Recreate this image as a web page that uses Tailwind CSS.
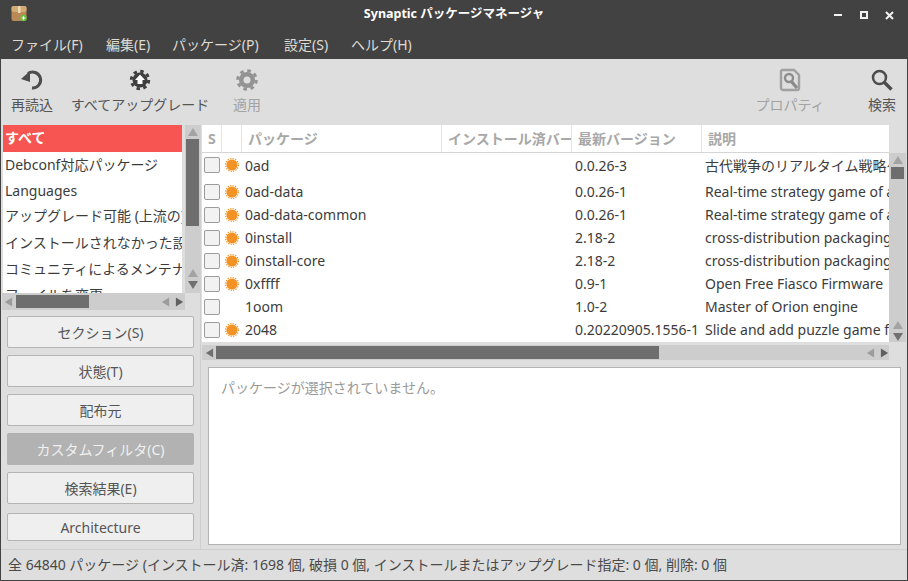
<!DOCTYPE html>
<html lang="ja">
<head>
  <meta charset="UTF-8" />
  <title>Synaptic パッケージマネージャ</title>
  <script src="https://cdn.jsdelivr.net/npm/@tailwindcss/browser@4"></script>
</head>
<body class="bg-[#dedede] font-['Noto_Sans','Noto_Sans_CJK_JP',sans-serif] text-[14px] text-[#3c3c3c] overflow-hidden">
  <svg class="hidden">
    <symbol id="sun" viewBox="0 0 14 14">
      <circle cx="7" cy="7" r="5.6" fill="#f39325" />
      <circle cx="7" cy="7" r="6.4" fill="none" stroke="#f39325" stroke-width="1.2" stroke-dasharray="1.2 1.3" />
    </symbol>
    <symbol id="up" viewBox="0 0 12 10"><polygon points="6,1 11,9 1,9" /></symbol>
    <symbol id="down" viewBox="0 0 12 10"><polygon points="1,1 11,1 6,9" /></symbol>
    <symbol id="left" viewBox="0 0 10 12"><polygon points="9,1 9,11 1,6" /></symbol>
    <symbol id="right" viewBox="0 0 10 12"><polygon points="1,1 9,6 1,11" /></symbol>
  </svg>

  <div class="w-[908px] h-[581px] flex flex-col border-x border-b border-[#424242]">
    <!-- title bar + menu -->
    <div class="bg-[#424242] h-[59px] -mx-px shrink-0">
      <div class="h-[30px] flex items-center relative">
        <svg class="ml-[11px] mt-[-3px]" width="17" height="17" viewBox="0 0 17 17">
          <rect x="0.5" y="1" width="15" height="15" rx="2" fill="#b98a55" />
          <rect x="0.5" y="1" width="15" height="6" rx="2" fill="#d3ab75" />
          <rect x="7" y="1" width="2.5" height="7" fill="#ecd9b5" />
          <circle cx="12.5" cy="13" r="3.2" fill="#6cbf3c" />
          <path d="M12.5 11.2v3.6M10.7 13h3.6" stroke="#fff" stroke-width="1.2" />
        </svg>
        <div class="absolute left-0 right-0 top-[5px] text-center pl-[-8px] text-white font-bold text-[12.5px] leading-[18px]">Synaptic パッケージマネージャ</div>
        <div class="ml-auto flex items-center mr-[14px]">
          <div class="w-[8px] h-[2px] bg-[#f2f2f2] mr-[18px]"></div>
          <div class="w-[8px] h-[8px] border-2 border-[#f2f2f2] mr-[17px]"></div>
          <svg width="9" height="9" viewBox="0 0 9 9"><path d="M1 1l7 7M8 1l-7 7" stroke="#f2f2f2" stroke-width="2" /></svg>
        </div>
      </div>
      <div class="h-[29px] flex items-center text-[#dfdbd2] leading-[29px]">
        <span class="ml-[11px] w-[95px]">ファイル(F)</span>
        <span class="w-[66px]">編集(E)</span>
        <span class="w-[112px]">パッケージ(P)</span>
        <span class="w-[67px]">設定(S)</span>
        <span>ヘルプ(H)</span>
      </div>
    </div>

    <!-- toolbar -->
    <div class="h-[66px] shrink-0 flex -ml-px">
      <div class="w-[64px] flex flex-col items-center pt-[9px]">
        <svg width="24" height="24" viewBox="0 0 24 24" fill="none">
          <path d="M8 5.5 A8 8 0 1 1 12 20" stroke="#4d4d4d" stroke-width="3" />
          <polygon points="1,11 10,3 10,14" fill="#4d4d4d" />
        </svg>
        <span class="mt-[3px] leading-[20px] text-[#555]">再読込</span>
      </div>
      <div class="w-[152px] flex flex-col items-center pt-[9px]">
        <svg width="24" height="24" viewBox="0 0 24 24">
          <circle cx="12" cy="12" r="7.5" fill="#3f3f3f" />
          <circle cx="12" cy="12" r="8.7" fill="none" stroke="#3f3f3f" stroke-width="3" stroke-dasharray="3.4 3.43" />
          <polygon points="12,6.5 17,12 14.5,12 14.5,16 9.5,16 9.5,12 7,12" fill="#fff" />
        </svg>
        <span class="mt-[3px] leading-[20px] text-[#555] whitespace-nowrap">すべてアップグレード</span>
      </div>
      <div class="w-[62px] flex flex-col items-center pt-[9px]">
        <svg width="24" height="24" viewBox="0 0 24 24">
          <circle cx="12" cy="12" r="8" fill="#939393" />
          <circle cx="12" cy="12" r="9.3" fill="none" stroke="#939393" stroke-width="3" stroke-dasharray="3.6 3.7" />
          <circle cx="12" cy="12" r="3.5" fill="#dedede" />
        </svg>
        <span class="mt-[3px] leading-[20px] text-[#a3a3a3]">適用</span>
      </div>
      <div class="flex-1"></div>
      <div class="w-[84px] flex flex-col items-center pt-[9px]">
        <svg width="24" height="24" viewBox="0 0 24 24" fill="none">
          <path d="M4 2h12l5 5v13a2 2 0 0 1-2 2H5a2 2 0 0 1-2-2V3z" stroke="#a0a0a0" stroke-width="2.4" />
          <circle cx="11" cy="10" r="4" stroke="#8c8c8c" stroke-width="2.4" />
          <path d="M13 13l6 7" stroke="#8c8c8c" stroke-width="3.4" />
        </svg>
        <span class="mt-[3px] leading-[20px] text-[#a3a3a3] whitespace-nowrap">プロパティ</span>
      </div>
      <div class="w-[25px]"></div>
      <div class="w-[50px] flex flex-col items-center pt-[9px]">
        <svg width="24" height="24" viewBox="0 0 24 24" fill="none">
          <circle cx="9.5" cy="9.5" r="6.5" stroke="#4d4d4d" stroke-width="2.5" />
          <path d="M14.5 14.5l7 7" stroke="#4d4d4d" stroke-width="3.4" />
        </svg>
        <span class="mt-[3px] leading-[20px] text-[#555]">検索</span>
      </div>
    </div>

    <!-- main -->
    <div class="flex-1 flex min-h-0">
      <!-- left pane -->
      <div class="w-[200px] shrink-0 border-r border-[#cfcfcf] flex flex-col">
        <div class="flex h-[168px] pl-[2px]">
          <div class="w-[181px] bg-white overflow-hidden text-[#3c3c3c]">
            <div class="h-[27px] bg-[#f65552] text-white font-bold pl-[2px] leading-[26px]">すべて</div>
            <div class="h-[26px] pl-[2px] leading-[26px] whitespace-nowrap">Debconf対応パッケージ</div>
            <div class="h-[25px] pl-[2px] leading-[25px] whitespace-nowrap">Languages</div>
            <div class="h-[26px] pl-[2px] leading-[26px] whitespace-nowrap">アップグレード可能 (上流の)</div>
            <div class="h-[27px] pl-[2px] leading-[27px] whitespace-nowrap">インストールされなかった設定</div>
            <div class="h-[26px] pl-[2px] leading-[26px] whitespace-nowrap">コミュニティによるメンテナンス</div>
            <div class="h-[26px] pl-[2px] leading-[26px] whitespace-nowrap">ファイルを変更</div>
          </div>
          <div class="w-[15px] ml-[3px] bg-[#cdcdcd] flex flex-col items-center">
            <svg class="mt-[2px] fill-[#a3a3a3]" width="12" height="10"><use href="#up" /></svg>
            <div class="w-[13px] h-[87px] mt-[2px] bg-[#6e6e6e]"></div>
            <svg class="mt-[42px] fill-[#a3a3a3]" width="12" height="10"><use href="#up" /></svg>
            <svg class="mt-[2px] fill-[#707070]" width="12" height="10"><use href="#down" /></svg>
          </div>
        </div>
        <div class="h-[17px] w-[183px] ml-px bg-[#cdcdcd] flex items-center pl-[2px]">
          <svg class="fill-[#9c9c9c]" width="9" height="12"><use href="#left" /></svg>
          <div class="w-[73px] h-[13px] ml-[3px] bg-[#6e6e6e]"></div>
          <svg class="ml-[72px] fill-[#9c9c9c]" width="9" height="12"><use href="#left" /></svg>
          <svg class="ml-[5px] fill-[#606060]" width="9" height="12"><use href="#right" /></svg>
        </div>
        <div class="px-[6px] pt-[6px] flex flex-col gap-[7px] text-[#555]">
          <div class="h-[32px] bg-[#efefef] border border-[#b4b4b4] rounded-[2px] flex items-center justify-center">セクション(S)</div>
          <div class="h-[32px] bg-[#efefef] border border-[#b4b4b4] rounded-[2px] flex items-center justify-center">状態(T)</div>
          <div class="h-[32px] bg-[#efefef] border border-[#b4b4b4] rounded-[2px] flex items-center justify-center">配布元</div>
          <div class="h-[32px] bg-[#b2b2b2] rounded-[2px] text-[#f0f0f0] flex items-center justify-center">カスタムフィルタ(C)</div>
          <div class="h-[32px] bg-[#efefef] border border-[#b4b4b4] rounded-[2px] flex items-center justify-center">検索結果(E)</div>
          <div class="h-[28px] mt-[2px] bg-[#efefef] border border-[#b4b4b4] rounded-[2px] flex items-center justify-center">Architecture</div>
        </div>
      </div>

      <!-- right pane -->
      <div class="flex-1 min-w-0 flex flex-col pl-px">
        <div class="flex h-[217px]">
          <div class="w-[687px] bg-white overflow-hidden">
            <div class="h-[28px] border-b border-[#d5d5d5] flex font-bold text-[#a8a8a8] leading-[27px] whitespace-nowrap">
              <div class="w-[20px] pl-[6px] border-r border-[#e4e4e4]">S</div>
              <div class="w-[20px] border-r border-[#e4e4e4]"></div>
              <div class="w-[200px] pl-[6px] border-r border-[#e4e4e4]">パッケージ</div>
              <div class="w-[130px] pl-[6px] border-r border-[#e4e4e4] overflow-hidden">インストール済バージョン</div>
              <div class="w-[130px] pl-[6px] border-r border-[#e4e4e4]">最新バージョン</div>
              <div class="pl-[6px]">説明</div>
            </div>
            <div class="text-[#3c3c3c] whitespace-nowrap">
              <div class="h-[27px] pb-[3px] flex items-center">
                <div class="w-[16px] h-[16px] ml-[2px] bg-[#f2f2f2] border border-[#9c9c9c] rounded-[2px]"></div>
                <svg class="ml-[5px]" width="14" height="14"><use href="#sun" /></svg>
                <div class="w-[330px] ml-[6px]">0ad</div><div class="w-[130px]">0.0.26-3</div><div class="w-[184px] overflow-hidden">古代戦争のリアルタイム戦略ゲーム</div>
              </div>
              <div class="h-[23px] flex items-center">
                <div class="w-[16px] h-[16px] ml-[2px] bg-[#f2f2f2] border border-[#9c9c9c] rounded-[2px]"></div>
                <svg class="ml-[5px]" width="14" height="14"><use href="#sun" /></svg>
                <div class="w-[330px] ml-[6px]">0ad-data</div><div class="w-[130px]">0.0.26-1</div><div class="w-[184px] overflow-hidden">Real-time strategy game of ancient</div>
              </div>
              <div class="h-[23px] flex items-center">
                <div class="w-[16px] h-[16px] ml-[2px] bg-[#f2f2f2] border border-[#9c9c9c] rounded-[2px]"></div>
                <svg class="ml-[5px]" width="14" height="14"><use href="#sun" /></svg>
                <div class="w-[330px] ml-[6px]">0ad-data-common</div><div class="w-[130px]">0.0.26-1</div><div class="w-[184px] overflow-hidden">Real-time strategy game of ancient</div>
              </div>
              <div class="h-[23px] flex items-center">
                <div class="w-[16px] h-[16px] ml-[2px] bg-[#f2f2f2] border border-[#9c9c9c] rounded-[2px]"></div>
                <svg class="ml-[5px]" width="14" height="14"><use href="#sun" /></svg>
                <div class="w-[330px] ml-[6px]">0install</div><div class="w-[130px]">2.18-2</div><div class="w-[184px] overflow-hidden">cross-distribution packaging system</div>
              </div>
              <div class="h-[23px] flex items-center">
                <div class="w-[16px] h-[16px] ml-[2px] bg-[#f2f2f2] border border-[#9c9c9c] rounded-[2px]"></div>
                <svg class="ml-[5px]" width="14" height="14"><use href="#sun" /></svg>
                <div class="w-[330px] ml-[6px]">0install-core</div><div class="w-[130px]">2.18-2</div><div class="w-[184px] overflow-hidden">cross-distribution packaging system</div>
              </div>
              <div class="h-[23px] flex items-center">
                <div class="w-[16px] h-[16px] ml-[2px] bg-[#f2f2f2] border border-[#9c9c9c] rounded-[2px]"></div>
                <svg class="ml-[5px]" width="14" height="14"><use href="#sun" /></svg>
                <div class="w-[330px] ml-[6px]">0xffff</div><div class="w-[130px]">0.9-1</div><div class="w-[184px] overflow-hidden">Open Free Fiasco Firmware</div>
              </div>
              <div class="h-[23px] flex items-center">
                <div class="w-[16px] h-[16px] ml-[2px] bg-[#f2f2f2] border border-[#9c9c9c] rounded-[2px]"></div>
                <div class="w-[14px] ml-[5px]"></div>
                <div class="w-[330px] ml-[6px]">1oom</div><div class="w-[130px]">1.0-2</div><div class="w-[184px] overflow-hidden">Master of Orion engine</div>
              </div>
              <div class="h-[23px] flex items-center">
                <div class="w-[16px] h-[16px] ml-[2px] bg-[#f2f2f2] border border-[#9c9c9c] rounded-[2px]"></div>
                <svg class="ml-[5px]" width="14" height="14"><use href="#sun" /></svg>
                <div class="w-[330px] ml-[6px]">2048</div><div class="w-[130px]">0.20220905.1556-1</div><div class="w-[184px] overflow-hidden">Slide and add puzzle game for</div>
              </div>
            </div>
          </div>
          <div class="w-[17px] pt-[28px]">
            <div class="h-[189px] bg-[#cdcdcd] flex flex-col items-center">
              <svg class="mt-[2px] fill-[#a3a3a3]" width="12" height="10"><use href="#up" /></svg>
              <div class="w-[13px] h-[12px] mt-[2px] bg-[#6e6e6e]"></div>
              <svg class="mt-[141px] fill-[#a3a3a3]" width="12" height="10"><use href="#up" /></svg>
              <svg class="mt-[2px] fill-[#707070]" width="12" height="10"><use href="#down" /></svg>
            </div>
          </div>
        </div>
        <div class="h-[15px] w-[687px] mt-[3px] bg-[#cdcdcd] flex items-center pl-[3px]">
          <svg class="fill-[#707070]" width="9" height="12"><use href="#left" /></svg>
          <div class="w-[443px] h-[13px] ml-[2px] bg-[#6e6e6e]"></div>
          <svg class="ml-[207px] fill-[#9c9c9c]" width="9" height="12"><use href="#left" /></svg>
          <svg class="ml-[5px] fill-[#606060]" width="9" height="12"><use href="#right" /></svg>
        </div>
        <div class="w-[693px] h-[178px] ml-[6px] mt-[7px] bg-white border border-[#b4b4b4] px-[12px] py-[9px] text-[#9a9a9a]">パッケージが選択されていません。</div>
      </div>
    </div>

    <!-- status bar -->
    <div class="h-[31px] shrink-0 border-t border-[#cfcfcf] pl-[7px] leading-[30px] text-[#4a4a4a] whitespace-nowrap">全 64840 パッケージ (インストール済: 1698 個, 破損 0 個, インストールまたはアップグレード指定: 0 個, 削除: 0 個</div>
  </div>
</body>
</html>
